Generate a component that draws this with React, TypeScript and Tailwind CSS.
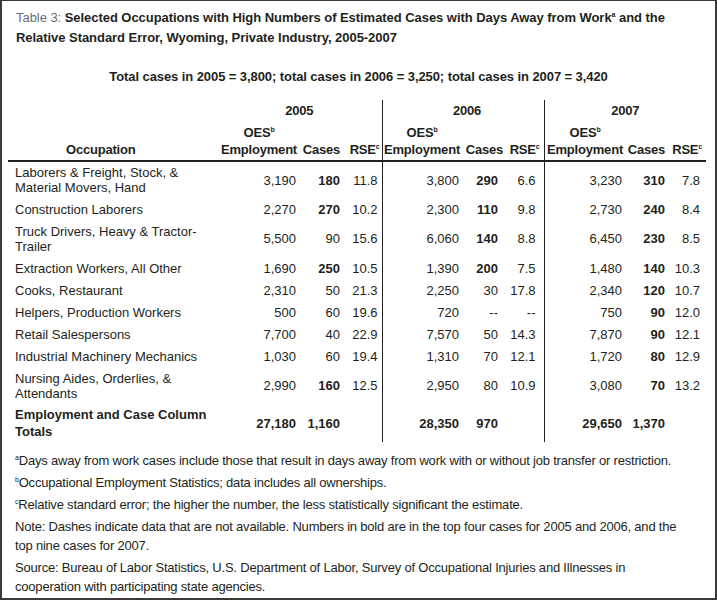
import React from "react";

type Cell = { v: string; b?: boolean };
type Row = { occ: string[]; cells: Cell[]; total?: boolean };

const c = (v: string, b = false): Cell => ({ v, b });

const rows: Row[] = [
  { occ: ["Laborers & Freight, Stock, &", "Material Movers, Hand"], cells: [c("3,190"), c("180", true), c("11.8"), c("3,800"), c("290", true), c("6.6"), c("3,230"), c("310", true), c("7.8")] },
  { occ: ["Construction Laborers"], cells: [c("2,270"), c("270", true), c("10.2"), c("2,300"), c("110", true), c("9.8"), c("2,730"), c("240", true), c("8.4")] },
  { occ: ["Truck Drivers, Heavy & Tractor-", "Trailer"], cells: [c("5,500"), c("90"), c("15.6"), c("6,060"), c("140", true), c("8.8"), c("6,450"), c("230", true), c("8.5")] },
  { occ: ["Extraction Workers, All Other"], cells: [c("1,690"), c("250", true), c("10.5"), c("1,390"), c("200", true), c("7.5"), c("1,480"), c("140", true), c("10.3")] },
  { occ: ["Cooks, Restaurant"], cells: [c("2,310"), c("50"), c("21.3"), c("2,250"), c("30"), c("17.8"), c("2,340"), c("120", true), c("10.7")] },
  { occ: ["Helpers, Production Workers"], cells: [c("500"), c("60"), c("19.6"), c("720"), c("--"), c("--"), c("750"), c("90", true), c("12.0")] },
  { occ: ["Retail Salespersons"], cells: [c("7,700"), c("40"), c("22.9"), c("7,570"), c("50"), c("14.3"), c("7,870"), c("90", true), c("12.1")] },
  { occ: ["Industrial Machinery Mechanics"], cells: [c("1,030"), c("60"), c("19.4"), c("1,310"), c("70"), c("12.1"), c("1,720"), c("80", true), c("12.9")] },
  { occ: ["Nursing Aides, Orderlies, &", "Attendants"], cells: [c("2,990"), c("160", true), c("12.5"), c("2,950"), c("80"), c("10.9"), c("3,080"), c("70", true), c("13.2")] },
  { occ: ["Employment and Case Column", "Totals"], total: true, cells: [c("27,180", true), c("1,160", true), c(""), c("28,350", true), c("970", true), c(""), c("29,650", true), c("1,370", true), c("")] },
];

const dataCls = [
  "pr-[4px]",
  "pr-[2px]",
  "pr-[4px]",
  "pr-[3px] border-l border-l-[#231f20]",
  "pr-[10px]",
  "pr-[8px]",
  "pr-[3px] border-l border-l-[#231f20]",
  "pr-[2px]",
  "pr-[6px]",
];

const Sup = ({ t }: { t: string }) => (
  <span className="relative -top-[5px] text-[7px] leading-none">{t}</span>
);

const EmpHead = () => (
  <div className="inline-flex flex-col items-center">
    <span>
      OES
      <Sup t="b" />
    </span>
    <span>Employment</span>
  </div>
);

export default function App() {
  return (
    <div
      className="w-[717px] h-[600px] border-x-2 border-b-2 border-t border-[#3a3a3a] bg-white text-[#231f20] overflow-hidden"
      style={{ fontFamily: '"Liberation Sans", Arial, sans-serif' }}
    >
      <div className="pl-[14px] pt-[7px] text-[13px] leading-[20px] font-bold tracking-[-0.05px]">
        <span className="font-normal text-[#6d6e71]">Table 3: </span>
        Selected Occupations with High Numbers of Estimated Cases with Days Away from Work
        <Sup t="a" /> and the
        <br />
        Relative Standard Error, Wyoming, Private Industry, 2005-2007
      </div>

      <div className="mt-[20px] text-center text-[13px] leading-[18px] font-bold tracking-[-0.08px]">
        Total cases in 2005 = 3,800; total cases in 2006 = 3,250; total cases in 2007 = 3,420
      </div>

      <table className="ml-[6px] mt-[14px] w-[698px] table-fixed border-collapse text-[13px]">
        <colgroup>
          <col className="w-[207px]" />
          <col className="w-[85px]" />
          <col className="w-[42px]" />
          <col className="w-[40px]" />
          <col className="w-[80px]" />
          <col className="w-[46px]" />
          <col className="w-[36px]" />
          <col className="w-[81px]" />
          <col className="w-[42px]" />
          <col className="w-[39px]" />
        </colgroup>
        <thead className="font-bold leading-[17px] tracking-[-0.2px]">
          <tr className="h-[21px]">
            <th></th>
            <th colSpan={3} className="text-center pl-[2px]">2005</th>
            <th colSpan={3} className="text-center pl-[8px] border-l border-l-[#231f20]">2006</th>
            <th colSpan={3} className="text-center border-l border-l-[#231f20]">2007</th>
          </tr>
          <tr className="h-[40px] align-bottom border-b-2 border-b-[#231f20]">
            <th className="text-left pl-[58px] pb-[2px]">Occupation</th>
            <th className="text-right pr-[3px] pb-[2px]"><EmpHead /></th>
            <th className="text-right pr-[2px] pb-[2px]">Cases</th>
            <th className="text-right pr-[2px] pb-[2px] whitespace-nowrap">RSE<Sup t="c" /></th>
            <th className="text-right pr-[2px] pb-[2px] border-l border-l-[#231f20]"><EmpHead /></th>
            <th className="text-right pr-[5px] pb-[2px]">Cases</th>
            <th className="text-right pr-[4px] pb-[2px] whitespace-nowrap">RSE<Sup t="c" /></th>
            <th className="text-right pr-[2px] pb-[2px] border-l border-l-[#231f20]"><EmpHead /></th>
            <th className="text-right pr-[2px] pb-[2px]">Cases</th>
            <th className="text-right pr-[4px] pb-[2px] whitespace-nowrap">RSE<Sup t="c" /></th>
          </tr>
        </thead>
        <tbody className="leading-[15px]">
          {rows.map((r, i) => {
            const h = r.total ? "h-[38px]" : r.occ.length > 1 ? "h-[37px]" : "h-[22px]";
            return (
              <tr key={i} className={`${h} align-middle`}>
                <td className={`pl-[7px] text-left ${r.total ? "font-bold leading-[17px]" : ""}`}>
                  {r.occ.map((l, j) => (
                    <div key={j}>{l}</div>
                  ))}
                </td>
                {r.cells.map((cell, j) => (
                  <td
                    key={j}
                    className={`text-right whitespace-nowrap ${dataCls[j]} ${cell.b ? "font-bold" : ""}`}
                  >
                    {cell.v}
                  </td>
                ))}
              </tr>
            );
          })}
        </tbody>
      </table>

      <div className="pl-[13px] pr-[8px] mt-[9px] text-[13px] leading-[19px] flex flex-col gap-[3px] tracking-[-0.2px]">
        <p><Sup t="a" />Days away from work cases include those that result in days away from work with or without job transfer or restriction.</p>
        <p><Sup t="b" />Occupational Employment Statistics; data includes all ownerships.</p>
        <p><Sup t="c" />Relative standard error; the higher the number, the less statistically significant the estimate.</p>
        <p>
          Note: Dashes indicate data that are not available. Numbers in bold are in the top four cases for 2005 and 2006, and the
          <br />
          top nine cases for 2007.
        </p>
        <p>
          Source: Bureau of Labor Statistics, U.S. Department of Labor, Survey of Occupational Injuries and Illnesses in
          <br />
          cooperation with participating state agencies.
        </p>
      </div>
    </div>
  );
}
